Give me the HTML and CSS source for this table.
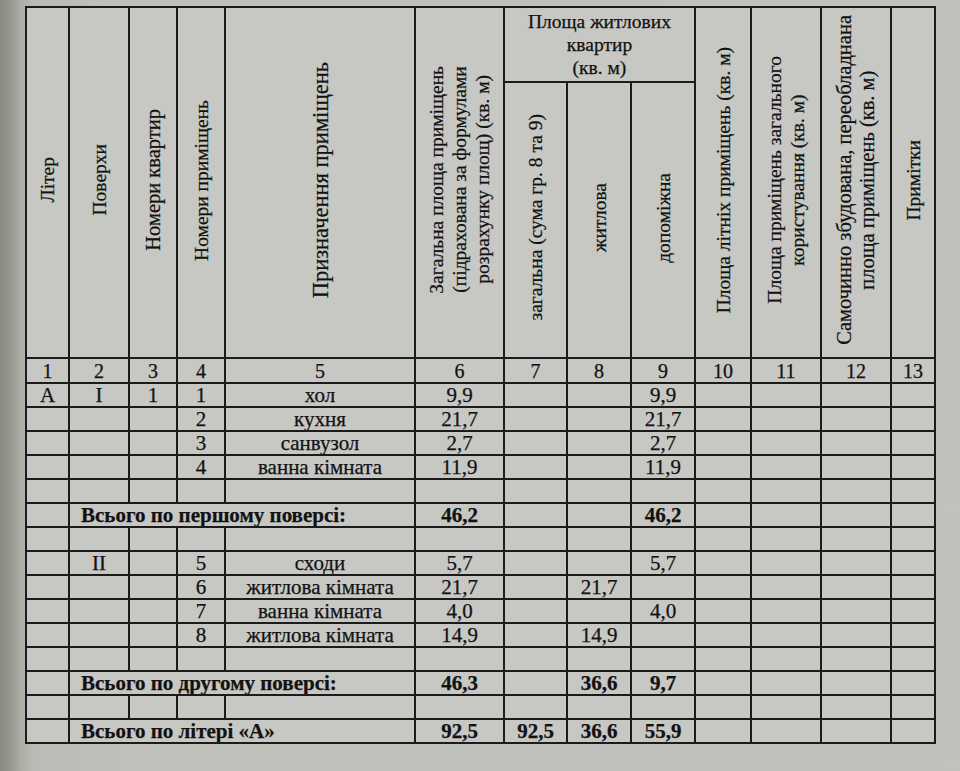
FILE: index.html
```html
<!DOCTYPE html>
<html lang="uk">
<head>
<meta charset="utf-8">
<title>Експлікація приміщень</title>
<link rel="stylesheet" href="styles.css">
</head>
<body>
<div class="sheet">
<table class="expl">
  <colgroup>
    <col class="c1"><col class="c2"><col class="c3"><col class="c4"><col class="c5">
    <col class="c6"><col class="c7"><col class="c8"><col class="c9"><col class="c10">
    <col class="c11"><col class="c12"><col class="c13">
  </colgroup>
  <thead>
    <tr class="h1">
      <th rowspan="2"><span class="v">Літер</span></th>
      <th rowspan="2"><span class="v">Поверхи</span></th>
      <th rowspan="2"><span class="v mid">Номери квартир</span></th>
      <th rowspan="2"><span class="v">Номери приміщень</span></th>
      <th rowspan="2"><span class="v big">Призначення приміщень</span></th>
      <th rowspan="2"><span class="v">Загальна площа приміщень<br>(підрахована за формулами<br>розрахунку площ) (кв. м)</span></th>
      <th colspan="3" class="grp">Площа житлових<br>квартир<br>(кв. м)</th>
      <th rowspan="2"><span class="v">Площа літніх приміщень (кв. м)</span></th>
      <th rowspan="2"><span class="v">Площа приміщень загального<br>користування (кв. м)</span></th>
      <th rowspan="2"><span class="v mid">Самочинно збудована, переобладнана<br>площа приміщень (кв. м)</span></th>
      <th rowspan="2"><span class="v">Примітки</span></th>
    </tr>
    <tr class="h2">
      <th><span class="v">загальна (сума гр. 8 та 9)</span></th>
      <th><span class="v">житлова</span></th>
      <th><span class="v">допоміжна</span></th>
    </tr>
    <tr class="nums">
      <td>1</td><td>2</td><td>3</td><td>4</td><td>5</td><td>6</td><td>7</td>
      <td>8</td><td>9</td><td>10</td><td>11</td><td>12</td><td>13</td>
    </tr>
  </thead>
  <tbody>
    <tr><td>А</td><td>I</td><td>1</td><td>1</td><td>хол</td><td>9,9</td><td></td><td></td><td>9,9</td><td></td><td></td><td></td><td></td></tr>
    <tr><td></td><td></td><td></td><td>2</td><td>кухня</td><td>21,7</td><td></td><td></td><td>21,7</td><td></td><td></td><td></td><td></td></tr>
    <tr><td></td><td></td><td></td><td>3</td><td>санвузол</td><td>2,7</td><td></td><td></td><td>2,7</td><td></td><td></td><td></td><td></td></tr>
    <tr><td></td><td></td><td></td><td>4</td><td>ванна кімната</td><td>11,9</td><td></td><td></td><td>11,9</td><td></td><td></td><td></td><td></td></tr>
    <tr><td></td><td></td><td></td><td></td><td></td><td></td><td></td><td></td><td></td><td></td><td></td><td></td><td></td></tr>
    <tr class="total"><td></td><td colspan="4" class="lbl">Всього по першому поверсі:</td><td>46,2</td><td></td><td></td><td>46,2</td><td></td><td></td><td></td><td></td></tr>
    <tr><td></td><td></td><td></td><td></td><td></td><td></td><td></td><td></td><td></td><td></td><td></td><td></td><td></td></tr>
    <tr><td></td><td>II</td><td></td><td>5</td><td>сходи</td><td>5,7</td><td></td><td></td><td>5,7</td><td></td><td></td><td></td><td></td></tr>
    <tr><td></td><td></td><td></td><td>6</td><td>житлова кімната</td><td>21,7</td><td></td><td>21,7</td><td></td><td></td><td></td><td></td><td></td></tr>
    <tr><td></td><td></td><td></td><td>7</td><td>ванна кімната</td><td>4,0</td><td></td><td></td><td>4,0</td><td></td><td></td><td></td><td></td></tr>
    <tr><td></td><td></td><td></td><td>8</td><td>житлова кімната</td><td>14,9</td><td></td><td>14,9</td><td></td><td></td><td></td><td></td><td></td></tr>
    <tr><td></td><td></td><td></td><td></td><td></td><td></td><td></td><td></td><td></td><td></td><td></td><td></td><td></td></tr>
    <tr class="total"><td></td><td colspan="4" class="lbl">Всього по другому поверсі:</td><td>46,3</td><td></td><td>36,6</td><td>9,7</td><td></td><td></td><td></td><td></td></tr>
    <tr><td></td><td></td><td></td><td></td><td></td><td></td><td></td><td></td><td></td><td></td><td></td><td></td><td></td></tr>
    <tr class="total"><td></td><td colspan="4" class="lbl">Всього по літері «А»</td><td>92,5</td><td>92,5</td><td>36,6</td><td>55,9</td><td></td><td></td><td></td><td></td></tr>
  </tbody>
</table>
</div>
</body>
</html>
```

FILE: styles.css
```css
html, body {
  margin: 0;
  padding: 0;
}
body {
  width: 960px;
  height: 771px;
  overflow: hidden;
  background: linear-gradient(to right, #8b8b82 0, #979790 10px, #adada6 20px, #bcbcb6 34px, #c0c0bb 120px, #c1c1bd 100%);
  font-family: "Liberation Serif", "Times New Roman", serif;
  color: #121212;
}
.sheet {
  padding: 6px 0 0 25px;
}
.expl {
  border-collapse: collapse;
  table-layout: fixed;
  width: 909px;
  background: #c7c7c3;
  font-size: 21px;
  line-height: 22px;
  -webkit-text-stroke: 0.25px #121212;
}
.expl th, .expl td {
  border: 2px solid #1b1b1b;
  padding: 0;
  text-align: center;
  vertical-align: middle;
  font-weight: normal;
  overflow: hidden;
  white-space: nowrap;
}
.c1 { width: 43px; }
.c2 { width: 60px; }
.c3 { width: 48px; }
.c4 { width: 48px; }
.c5 { width: 190px; }
.c6 { width: 89px; }
.c7 { width: 63px; }
.c8 { width: 64px; }
.c9 { width: 64px; }
.c10 { width: 56px; }
.c11 { width: 70px; }
.c12 { width: 70px; }
.c13 { width: 44px; }

.expl thead th {
  font-size: 19.5px;
}
.h1 { height: 75px; }
.h2 { height: 276px; }
.grp {
  vertical-align: top;
  line-height: 23px;
  padding-top: 2px;
}
.v {
  display: inline-block;
  writing-mode: vertical-rl;
  transform: rotate(180deg);
  white-space: nowrap;
  line-height: 23px;
  text-align: center;
}
.v.mid { font-size: 20.5px; }
.v.big { font-size: 22.5px; }
.nums td {
  height: 23px;
  font-size: 20px;
}
.expl tbody tr { height: 24px; }
.expl tbody td { height: 22px; }
.total td { font-weight: bold; }
.total .lbl {
  text-align: left;
  padding-left: 11px;
}
```
